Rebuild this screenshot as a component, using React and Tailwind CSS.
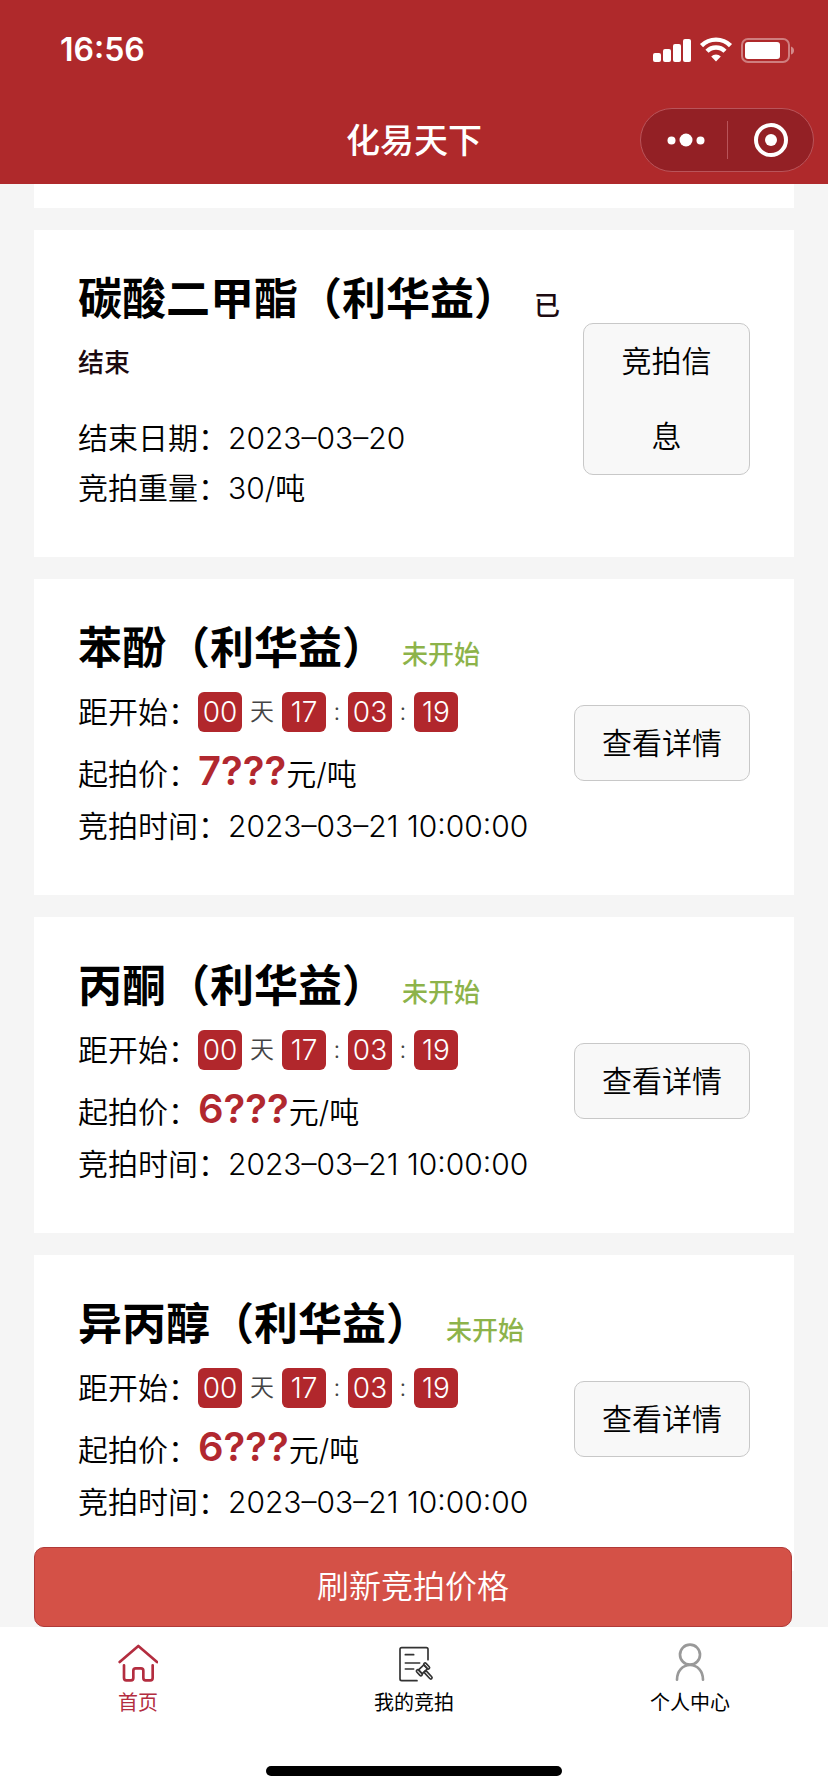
import { useState } from "react";

const auctions = [
    { id: 1, name: "碳酸二甲酯（利华益）", ended: true, endDate: "2023–03–20", weight: "30" },
    { id: 2, name: "苯酚（利华益）", price: "7???", time: "2023–03–21 10:00:00" },
    { id: 3, name: "丙酮（利华益）", price: "6???", time: "2023–03–21 10:00:00" },
    { id: 4, name: "异丙醇（利华益）", price: "6???", time: "2023–03–21 10:00:00" },
];

const tabs = [
    { id: "home", label: "首页", Icon: HomeIcon },
    { id: "auction", label: "我的竞拍", Icon: AuctionIcon },
    { id: "user", label: "个人中心", Icon: UserIcon },
];

function HomeIcon() {
    return (
        <svg className="size-10" viewBox="0 0 120 120" fill="none" stroke="#b32d3f" strokeWidth="8" strokeLinecap="round" strokeLinejoin="round">
            <path d="M5 57 61 9l56 48" />
            <path d="M18 67v38q0 7 7 7h14q7 0 7-7V83q0-7 7-7h16q7 0 7 7v22q0 7 7 7h14q7 0 7-7V67" />
        </svg>
    );
}

function AuctionIcon() {
    return (
        <svg className="size-10" viewBox="0 0 120 120" fill="none" stroke="#333" strokeWidth="5" strokeLinecap="round" strokeLinejoin="round">
            <path d="M102 50V19q0-5-5-5H23q-5 0-5 5v89q0 5 5 5h46" />
            <path d="M34 35h25M34 60h43M34 78h25" />
            <g transform="translate(87 79) rotate(-43)">
                <rect x="-11" y="-8" width="22" height="16" />
                <rect x="-19" y="-11" width="8" height="22" rx="4" />
                <rect x="11" y="-11" width="8" height="22" rx="4" />
                <rect x="-4" y="8" width="8" height="30" rx="4" />
            </g>
        </svg>
    );
}

function UserIcon() {
    return (
        <svg className="size-10" viewBox="0 0 120 120" fill="none" stroke="#999" strokeWidth="8" strokeLinecap="round">
            <circle cx="60" cy="35" r="30" />
            <path d="M21 110C21 84 38 66 60 66s39 18 39 44" />
        </svg>
    );
}

function StatusIcons() {
    return (
        <svg className="h-[26px] w-[142px]" viewBox="0 0 142 26" fill="#fff">
            <rect x="0" y="16" width="8" height="9" rx="2" />
            <rect x="10" y="12" width="8" height="13" rx="2" />
            <rect x="20" y="7" width="8" height="18" rx="2" />
            <rect x="30" y="2" width="8" height="23" rx="2" />
            <g fill="none" stroke="#fff" strokeWidth="4.4">
                <path d="M48.5 8.6a20.5 20.5 0 0 1 29 0" />
                <path d="M54 14.3a12.6 12.6 0 0 1 18 0" />
            </g>
            <path d="M63 24.5l-4.8-5a6.8 6.8 0 0 1 9.6 0z" />
            <rect x="89" y="2" width="47" height="23" rx="6" fill="none" stroke="#fff" strokeOpacity=".4" strokeWidth="2" />
            <rect x="92" y="5" width="35" height="17" rx="3" />
            <path d="M138 9.5q3 1 3 4t-3 4z" fillOpacity=".45" />
        </svg>
    );
}

function Header() {
    return (
        <header className="shrink-0 bg-[#af292b] text-white">
            <div className="flex h-24 items-center justify-between pt-1 pr-[33px] pl-[60px]">
                <span className="text-[32px] font-semibold">16:56</span>
                <StatusIcons />
            </div>
            <div className="grid h-[88px] grid-cols-[1fr_auto_1fr] items-center px-[14px]">
                <h1 className="col-start-2 text-[34px] font-medium">化易天下</h1>
                <div className="flex h-16 w-[174px] items-center justify-self-end rounded-full border border-[#b9545a] bg-[#932025]">
                    <button type="button" aria-label="更多" className="flex w-[86px] items-center justify-center pl-1">
                        <svg className="h-[14px] w-[38px]" viewBox="0 0 38 14" fill="#fff">
                            <circle cx="4.5" cy="7.5" r="4" />
                            <circle cx="19" cy="7" r="6.5" />
                            <circle cx="33.5" cy="7.5" r="4" />
                        </svg>
                    </button>
                    <div className="h-[38px] w-px bg-[#b9545a]" />
                    <button type="button" aria-label="关闭" className="flex flex-1 items-center justify-center">
                        <svg className="size-[34px]" viewBox="0 0 34 34">
                            <circle cx="17" cy="17" r="15" fill="none" stroke="#fff" strokeWidth="4" />
                            <circle cx="17" cy="17" r="6" fill="#fff" />
                        </svg>
                    </button>
                </div>
            </div>
        </header>
    );
}

function TimeBox({ children }) {
    return <span className="flex h-10 w-11 items-center justify-center rounded-md bg-[#b1272c] text-[28px] font-light text-white">{children}</span>;
}

function Countdown() {
    return (
        <div className="flex h-[70px] items-center">
            <span>距开始：</span>
            <TimeBox>00</TimeBox>
            <span className="w-10 text-center text-2xl text-[#444]">天</span>
            <TimeBox>17</TimeBox>
            <span className="w-[22px] text-center text-2xl text-[#444]">:</span>
            <TimeBox>03</TimeBox>
            <span className="w-[22px] text-center text-2xl text-[#444]">:</span>
            <TimeBox>19</TimeBox>
        </div>
    );
}

function AuctionCard({ item }) {
    return (
        <section className="flex items-center bg-white px-11 pt-[41px] pb-[26px]">
            <div className="flex-1 pb-[18px] text-[30px] leading-[50px] font-[350]">
                <h2 className="text-[44px] leading-[57px] font-bold">
                    {item.name}
                    {item.ended
                        ? <span className="ml-4 text-[26px] leading-none font-medium text-[#1c0a10]">已结束</span>
                        : <span className="ml-4 text-[26px] leading-none font-medium text-[#8db34a]">未开始</span>}
                </h2>
                {
                    item.ended ? <div className="pt-7">
                        <p>结束日期：{item.endDate}</p>
                        <p>竞拍重量：{item.weight}/吨</p>
                    </div> : <>
                        <Countdown />
                        <p className="leading-[54px]">
                            起拍价：<strong className="text-[40px] leading-none font-semibold text-[#b1282f]">{item.price}</strong>元/吨
                        </p>
                        <p>竞拍时间：{item.time}</p>
                    </>
                }
            </div>
            {/* buttons sit slightly above the middle of the text */}
            <div className="pb-1">
                {
                    item.ended
                        ? <button type="button" className="w-[167px] rounded-[10px] border border-[#c8c8c8] bg-[#f8f8f8] px-7 text-[30px] leading-[75px] font-[350]">竞拍信息</button>
                        : <button type="button" className="w-44 rounded-[10px] border border-[#c8c8c8] bg-[#f8f8f8] text-[30px] leading-[74px] font-[350]">查看详情</button>
                }
            </div>
        </section>
    );
}

export default function App() {
    const [active, setActive] = useState("home");

    return (
        <div className="flex h-screen flex-col bg-[#f5f5f5] font-[Inter,'Noto_Sans_CJK_SC',sans-serif] text-black">
            <Header />
            <main className="relative min-h-0 flex-1 overflow-hidden px-[34px]">
                <div className="flex flex-col gap-[22px]">
                    <div className="h-6 bg-white" />
                    {
                        auctions.map((item) => <AuctionCard key={item.id} item={item} />)
                    }
                </div>
                <button type="button" className="absolute right-9 bottom-0 left-[34px] h-20 rounded-[10px] border border-[#b03a38] bg-[#d45147] text-[32px] font-[350] text-white">
                    刷新竞拍价格
                </button>
            </main>
            <footer className="shrink-0 bg-white pb-4">
                <nav className="grid h-[139px] grid-cols-3 items-start pt-4">
                    {
                        tabs.map(({ id, label, Icon }) => (
                            <button key={id} type="button" onClick={() => setActive(id)} className="flex flex-col items-center gap-[6px]">
                                <Icon />
                                <span className={active === id ? "text-xl text-[#b32d3f]" : "text-xl"}>{label}</span>
                            </button>
                        ))
                    }
                </nav>
                <div className="mx-auto h-[10px] w-[296px] rounded-full bg-black" />
            </footer>
        </div>
    );
}
